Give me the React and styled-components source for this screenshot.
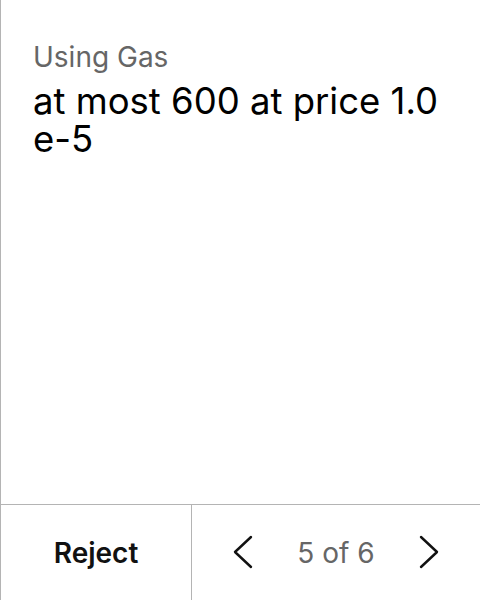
import React from 'react';
import styled, { createGlobalStyle } from 'styled-components';

const GlobalStyle = createGlobalStyle`
    html, body {
        margin: 0;
        padding: 0;
        background: #ffffff;
        font-family: Inter, "Noto Sans", sans-serif;
    }
`;

function Chevron({ dir }) {
    return (
        <svg width="22" height="34" viewBox="0 0 22 34" fill="none">
            <path
                d={dir === 'left' ? 'M19 2 L3 17 L19 32' : 'M3 2 L19 17 L3 32'}
                stroke="#111111"
                strokeWidth="2.4"
                strokeLinecap="round"
                strokeLinejoin="round"
            />
        </svg>
    );
}

function App() {
    return (
        <>
            <GlobalStyle />
            <Screen>
                <Body>
                    <Label>Using Gas</Label>
                    <Value>at most 600 at price 1.0 e-5</Value>
                </Body>
                <Footer>
                    <RejectButton>Reject</RejectButton>
                    <Pager>
                        <NavButton aria-label="previous">
                            <Chevron dir="left" />
                        </NavButton>
                        <Count>5 of 6</Count>
                        <NavButton aria-label="next">
                            <Chevron dir="right" />
                        </NavButton>
                    </Pager>
                </Footer>
            </Screen>
        </>
    );
}

const Screen = styled.div`
    width: 480px;
    height: 600px;
    box-sizing: border-box;
    border-left: 1px solid #b4b4b4;
    display: flex;
    flex-direction: column;
`;

const Body = styled.div`
    flex: 1;
    padding: 40px 32px 0 32px;
`;

const Label = styled.div`
    font-size: 28px;
    line-height: 34px;
    color: #666666;
`;

const Value = styled.div`
    margin-top: 8px;
    font-size: 36.5px;
    line-height: 38px;
    color: #000000;
`;

const Footer = styled.div`
    box-sizing: border-box;
    height: 96px;
    border-top: 1px solid #b4b4b4;
    display: grid;
    grid-template-columns: 191px 1fr;
`;

const RejectButton = styled.button`
    border: none;
    border-right: 1px solid #b4b4b4;
    background: none;
    font-family: Inter, sans-serif;
    font-size: 28px;
    font-weight: 600;
    color: #111111;
    padding: 0;
`;

const Pager = styled.div`
    display: flex;
    align-items: center;
    justify-content: space-between;
    padding: 0 40px 0 40px;
`;

const NavButton = styled.button`
    border: none;
    background: none;
    padding: 0;
    display: flex;
    margin-top: -2px;
`;

const Count = styled.span`
    font-size: 28px;
    color: #666666;
`;

export default App;
